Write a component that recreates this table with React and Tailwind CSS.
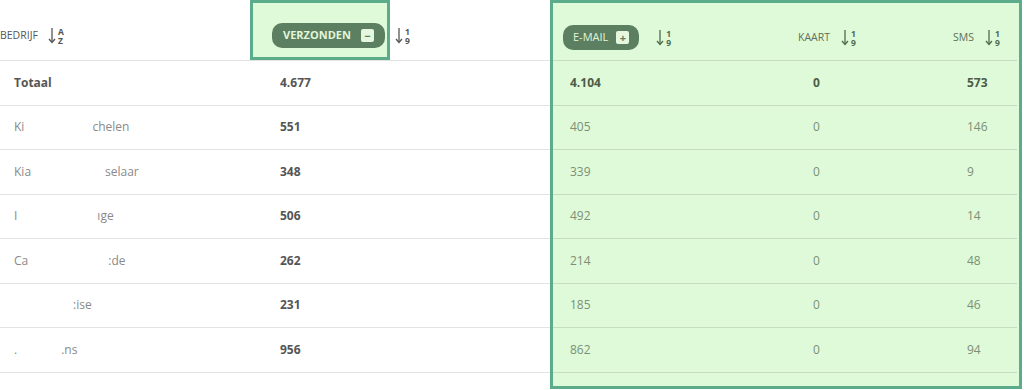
import React from 'react';

const rows = [
  { name: ['Ki', 'chelen'], gap: 68, sent: '551', email: '405', card: '0', sms: '146' },
  { name: ['Kia', 'selaar'], gap: 74, sent: '348', email: '339', card: '0', sms: '9' },
  { name: ['I', 'ıge'], gap: 80, sent: '506', email: '492', card: '0', sms: '14' },
  { name: ['Ca', ':de'], gap: 80, sent: '262', email: '214', card: '0', sms: '48' },
  { name: ['', ':ise'], gap: 59, sent: '231', email: '185', card: '0', sms: '46' },
  { name: ['.', '.ns'], gap: 44, sent: '956', email: '862', card: '0', sms: '94' },
];

const SortIcon = ({ top = '1', bottom = '9', color = '#555' }) => (
  <span className="inline-flex items-center gap-[2px]" style={{ color }}>
    <svg width="8" height="17" viewBox="0 0 8 17" fill="none" stroke="currentColor" strokeWidth="1.3">
      <path d="M4 1v14" />
      <path d="M1 12l3 3.5 3-3.5" />
    </svg>
    <span className="flex flex-col text-[8.5px] font-bold leading-[9px]">
      <span>{top}</span>
      <span>{bottom}</span>
    </span>
  </span>
);

const Badge = ({ label, sign, bold, tight }) => (
  <span className={(tight ? 'gap-[8px] px-[10px]' : 'gap-[10px] px-[11px]') + ' inline-flex items-center h-[25px] rounded-[10px] bg-[#5b7f60] text-[#e2f6da] text-[11px]'}>
    <span className={bold ? 'font-bold' : ''}>{label}</span>
    <span className="flex items-center justify-center w-[13px] h-[13px] rounded-[2px] bg-[#e6f7df] text-[#5b7f60] text-[11px] font-bold leading-none">
      {sign}
    </span>
  </span>
);

export default function App() {
  return (
    <div className="flex w-[1024px] h-[390px] bg-white overflow-hidden" style={{ fontFamily: '"Open Sans", "Liberation Sans", sans-serif' }}>
      {/* linker tabel */}
      <div className="w-[550px] flex flex-col">
        <div className="flex h-[61px] border-b border-[#e3e3e3]">
          <div className="w-[250px] flex items-center gap-[10px] text-[10.5px] text-[#555] pt-[11px] self-stretch">
            <span>BEDRIJF</span>
            <SortIcon top="A" bottom="Z" />
          </div>
          <div className="w-[140px] h-[60px] border-[3px] border-[#5cab8a] bg-[#defad8] flex items-center pl-[19px] pt-[11px]">
            <Badge label="VERZONDEN" sign="−" bold />
          </div>
          <div className="flex items-center pl-[5px] pt-[11px]">
            <SortIcon />
          </div>
        </div>
        <div className="flex h-[44.5px] border-b border-[#e3e3e3] items-center text-[12px]">
          <div className="w-[250px] pl-[14px] font-bold text-[#555]">Totaal</div>
          <div className="pl-[30px] font-bold text-[#555]">4.677</div>
        </div>
        {rows.map((r, i) => (
          <div key={i} className="flex h-[44.5px] border-b border-[#e3e3e3] items-center text-[12px]">
            <div className="w-[250px] pl-[14px] text-[#8a8a8a] flex">
              <span>{r.name[0]}</span>
              <span style={{ marginLeft: r.gap }}>{r.name[1]}</span>
            </div>
            <div className="pl-[30px] font-bold text-[#555]">{r.sent}</div>
          </div>
        ))}
      </div>

      {/* rechter paneel */}
      <div className="w-[472px] h-[389px] border-[3px] border-[#5cab8a] bg-[#defad8] pr-[2px] flex flex-col">
        <div className="grid grid-cols-[245px_155px_1fr] h-[58px] border-b border-[#c6ddc1] items-center pt-[12px] text-[10.5px] text-[#5f6f5a]">
          <div className="flex items-center gap-[17px] pl-[10px]">
            <Badge label="E-MAIL" sign="+" tight />
            <SortIcon color="#4f6b4e" />
          </div>
          <div className="flex items-center gap-[11px]">
            <span>KAART</span>
            <SortIcon color="#4f6b4e" />
          </div>
          <div className="flex items-center gap-[11px]">
            <span>SMS</span>
            <SortIcon color="#4f6b4e" />
          </div>
        </div>
        <div className="grid grid-cols-[245px_155px_1fr] h-[44.5px] border-b border-[#c6ddc1] items-center text-[12px] font-bold text-[#4d5c48]">
          <div className="pl-[17px]">4.104</div>
          <div className="pl-[15px]">0</div>
          <div className="pl-[14px]">573</div>
        </div>
        {rows.map((r, i) => (
          <div key={i} className="grid grid-cols-[245px_155px_1fr] h-[44.5px] border-b border-[#c6ddc1] items-center text-[12px] text-[#7d8f77]">
            <div className="pl-[17px]">{r.email}</div>
            <div className="pl-[15px]">{r.card}</div>
            <div className="pl-[14px]">{r.sms}</div>
          </div>
        ))}
      </div>
    </div>
  );
}
